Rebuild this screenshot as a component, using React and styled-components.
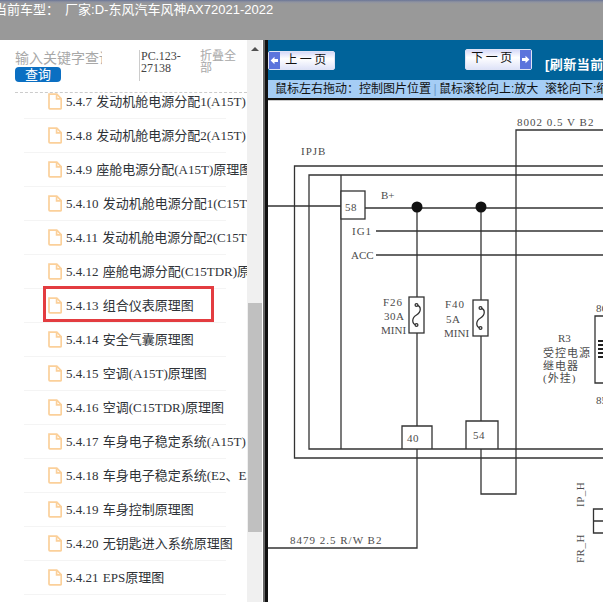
import React from "react";
import styled, { createGlobalStyle } from "styled-components";

const CJK = `"Liberation Sans", "Noto Sans CJK SC", sans-serif`;
const SERIF = `"Liberation Serif", "Noto Sans CJK SC", serif`;

const Global = createGlobalStyle`
  html, body { margin: 0; padding: 0; background: #fff; overflow: hidden; }
  #root { width: 603px; height: 602px; }
  * { box-sizing: border-box; }
`;

const Page = styled.div`
  width: 603px;
  height: 602px;
  display: flex;
  flex-direction: column;
  overflow: hidden;
`;

const Header = styled.header`
  flex: 0 0 40px;
  background: linear-gradient(#6a7596 0, #8f93a0 2px, #999 4px);
  color: #fff;
  font: 13px/17px ${CJK};
  padding-top: 1px;
  white-space: nowrap;
  overflow: hidden;
`;

const HeaderText = styled.div`
  margin-left: -6px;
  word-spacing: 2.5px;
`;

const Body = styled.div`
  flex: 1;
  min-height: 0;
  display: flex;
`;

const Sidebar = styled.aside`
  position: relative;
  flex: 0 0 247px;
  display: flex;
  flex-direction: column;
  background: #fff;
  overflow: hidden;
`;

const SearchBar = styled.div`
  flex: 0 0 53px;
  margin-left: 15px;
  padding-top: 10px;
  display: flex;
  border-bottom: 1px dashed #ccc;
`;

const SearchBox = styled.div`
  width: 124px;
  display: flex;
  flex-direction: column;
  align-items: flex-start;
`;

const SearchInput = styled.input`
  width: 87px;
  height: 17px;
  border: 0;
  padding: 0;
  outline: 0;
  background: transparent;
  font: 14px/17px ${CJK};
  &::placeholder { color: #a8a8a8; opacity: 1; }
`;

const SearchButton = styled.button`
  width: 46px;
  height: 15px;
  border: 0;
  border-radius: 4px;
  padding: 0;
  background: #0b6fc2;
  color: #fff;
  font: 13px/15px ${CJK};
`;

const Code = styled.div`
  width: 61px;
  height: 31px;
  padding-left: 1px;
  border-left: 1px solid #ccc;
  color: #444;
  font: 12px/12px ${SERIF};
`;

const Collapse = styled.div`
  width: 37px;
  color: #a8a8a8;
  font: 12px/12px ${CJK};
`;

const List = styled.ul`
  flex: 1;
  min-height: 0;
  margin: 0;
  padding: 0;
  list-style: none;
  overflow: hidden;
`;

const Row = styled.li`
  width: 202px;
  height: 34px;
  margin-left: 24px;
  padding-left: 24px;
  display: flex;
  align-items: center;
  gap: 4px;
  border-bottom: 1px solid #f4f4f4;
  color: #2f3338;
  font: 13px/16px ${SERIF};
  word-spacing: 1px;
  white-space: nowrap;
  &:first-child { margin-top: -8px; }
`;

const Highlight = styled.div`
  position: absolute;
  left: 43px;
  top: 246px;
  width: 171px;
  height: 36px;
  border: 3px solid #e33c40;
`;

const Scrollbar = styled.div`
  position: relative;
  flex: 0 0 15px;
  background: #f0f0f0;
`;

const ScrollArrow = styled.div`
  position: absolute;
  left: 4px;
  top: 7px;
  border-left: 4px solid transparent;
  border-right: 4px solid transparent;
  border-bottom: 4px solid #505050;
`;

const ScrollThumb = styled.div`
  position: absolute;
  left: 1px;
  top: 263px;
  width: 14px;
  height: 229px;
  background: #c0c0c0;
`;

const Divider = styled.div`
  flex: 0 0 6px;
  background: linear-gradient(90deg, #fff 0 1px, #666 1px 3px, #111 3px 6px);
`;

const Main = styled.main`
  flex: 1;
  min-width: 0;
  display: flex;
  flex-direction: column;
  overflow: hidden;
`;

const Toolbar = styled.div`
  flex: 0 0 40px;
  display: flex;
  background: #00639a;
  white-space: nowrap;
`;

const PageButton = styled.div`
  flex: none;
  width: 67px;
  height: ${p => p.$tall ? 21 : 19}px;
  margin-top: ${p => p.$tall ? 9 : 11}px;
  margin-left: ${p => p.$offset}px;
  display: flex;
  flex-direction: ${p => p.$reverse ? "row-reverse" : "row"};
  border: 1px solid #dfe3f5;
  border-radius: 2px;
  background: linear-gradient(#d6daf8, #fff 40%, #dfe3f8);
  color: #111;
  font: 12px/17px ${CJK};
`;

const ButtonCap = styled.span`
  flex: 0 0 11px;
  display: flex;
  align-items: center;
  justify-content: center;
  background: #5b74dc;
`;

const ButtonLabel = styled.span`
  flex: 1;
  text-align: center;
  letter-spacing: 2.5px;
`;

const Refresh = styled.div`
  flex: none;
  margin: 17px 0 0 13px;
  color: #fff;
  font: bold 13px/16px ${CJK};
  letter-spacing: 0.5px;
`;

const Hint = styled.div`
  flex: 0 0 20px;
  padding-left: 7px;
  background: #a5cdf5;
  border-bottom: 2px solid #111;
  color: #111;
  font: 12px/18px ${CJK};
  white-space: pre;
`;

const HintSep = styled.span`
  display: inline-block;
  width: 8px;
  text-align: center;
  color: #6f9cc8;
`;

const Diagram = styled.svg`
  display: block;
  flex: 1;
  min-height: 0;
  width: 335px;
  border-top: 1px solid #ccc;
  background: #fff;
`;

const Wires = styled.g`
  fill: none;
  stroke: #333;
  stroke-width: 1.3;
`;

const Label = styled.text`
  fill: #4c4c4c;
  font-family: ${SERIF};
  font-size: ${p => p.$size || 11}px;
  letter-spacing: ${p => p.$spacing ?? 1}px;
`;

const items = [
  "5.4.7 发动机舱电源分配1(A15T)",
  "5.4.8 发动机舱电源分配2(A15T)",
  "5.4.9 座舱电源分配(A15T)原理图",
  "5.4.10 发动机舱电源分配1(C15TDR)",
  "5.4.11 发动机舱电源分配2(C15TDR)",
  "5.4.12 座舱电源分配(C15TDR)原理图",
  "5.4.13 组合仪表原理图",
  "5.4.14 安全气囊原理图",
  "5.4.15 空调(A15T)原理图",
  "5.4.16 空调(C15TDR)原理图",
  "5.4.17 车身电子稳定系统(A15T)",
  "5.4.18 车身电子稳定系统(E2、E3)",
  "5.4.19 车身控制原理图",
  "5.4.20 无钥匙进入系统原理图",
  "5.4.21 EPS原理图",
];

const DocIcon = () => (
  <svg width="14" height="17" viewBox="0 0 14 17" fill="none" stroke="#fbd09a" strokeWidth="1.7" style={{ flex: "none" }}>
    <path d="M1 1.2h7.8L13.2 5.6V15a.9.9 0 0 1-.9.9H1.9A.9.9 0 0 1 1 15V1.2Z" />
    <path d="M8.6 1.2V5.8H13.2" />
  </svg>
);

const Arrow = ({ flip }) => (
  <svg width="9" height="9" viewBox="0 0 9 9" style={flip ? { transform: "scaleX(-1)" } : undefined}>
    <path d="M1 3h3.5V.8L8.4 4.5 4.5 8.2V6H1Z" fill="#fff" />
  </svg>
);

const Fuse = ({ x, y }) => (
  <g>
    <rect x={x} y={y} width="15" height="36" fill="#fff" />
    <path d={`M${x + 7.5} ${y + 8}c5 1 5 7 0 10s-5 9 0 10`} />
    <circle cx={x + 7.5} cy={y + 8} r="1.4" fill="#fff" />
    <circle cx={x + 7.5} cy={y + 28} r="1.4" fill="#fff" />
  </g>
);

export default function App() {
  return (
    <Page>
      <Global />
      <Header>
        <HeaderText>当前车型： 厂家:D-东风汽车风神AX72021-2022</HeaderText>
      </Header>
      <Body>
        <Sidebar>
          <SearchBar>
            <SearchBox>
              <SearchInput placeholder="输入关键字查询" readOnly />
              <SearchButton>查询</SearchButton>
            </SearchBox>
            <Code>PC.123-27138</Code>
            <Collapse>折叠全部</Collapse>
          </SearchBar>
          <List>
            {items.map(t => (
              <Row key={t}>
                <DocIcon />
                <span>{t}</span>
              </Row>
            ))}
          </List>
          <Highlight />
        </Sidebar>
        <Scrollbar>
          <ScrollArrow />
          <ScrollThumb />
        </Scrollbar>
        <Divider />
        <Main>
          <Toolbar>
            <PageButton $offset={0}>
              <ButtonCap><Arrow flip /></ButtonCap>
              <ButtonLabel>上一页</ButtonLabel>
            </PageButton>
            <PageButton $offset={130} $reverse $tall>
              <ButtonCap><Arrow /></ButtonCap>
              <ButtonLabel>下一页</ButtonLabel>
            </PageButton>
            <Refresh>[刷新当前页面]</Refresh>
          </Toolbar>
          <Hint>鼠标左右拖动：控制图片位置<HintSep>|</HintSep>{"鼠标滚轮向上:放大  滚轮向下:缩小"}</Hint>
          <Diagram viewBox="268 101 335 501" preserveAspectRatio="xMinYMin slice">
            <Wires>
              <path d="M603 130H516V494H481V449" />
              <path d="M603 166H294.5V458H603" />
              <path d="M603 175H309V449H603" />
              <path d="M341 175V449" />
              <path d="M268 206H341" />
              <path d="M365 208H603" />
              <path d="M376 231H603" />
              <path d="M376 255H603" />
              <path d="M417 207V297M417 333V426M417 449V548H268" />
              <path d="M481 207V300M481 336V421" />
              <rect x="341" y="191" width="24" height="28" fill="#fff" />
              <path d="M402 449V426H432V449" />
              <path d="M466 449V421H498V449" />
              <Fuse x={409} y={297} />
              <Fuse x={473} y={300} />
              <path d="M603 316H595V383H603" />
              <path d="M603 509H593.500V533H603M593.500 521H603" />
            </Wires>
            <circle cx="417" cy="207" r="5.5" fill="#111" />
            <circle cx="481" cy="207" r="5.5" fill="#111" />
            <path d="M598 341h5M598 345h5M598 349h5M598 353h5M598 357h5" stroke="#222" strokeWidth="2" />
            <Label x="517" y="126">8002 0.5 V B2</Label>
            <Label x="301" y="155">IPJB</Label>
            <Label x="345" y="211" $spacing={0.5}>58</Label>
            <Label x="381" y="199" $spacing={0}>B+</Label>
            <Label x="352" y="235">IG1</Label>
            <Label x="351" y="259" $spacing={0}>ACC</Label>
            <Label x="383" y="306">F26</Label>
            <Label x="384" y="320" $spacing={0.5}>30A</Label>
            <Label x="381" y="334" $spacing={0}>MINI</Label>
            <Label x="445" y="308">F40</Label>
            <Label x="446" y="323" $spacing={0.5}>5A</Label>
            <Label x="444" y="337" $spacing={0}>MINI</Label>
            <Label x="558" y="342" $spacing={0}>R3</Label>
            <Label x="596" y="312" $spacing={0}>86</Label>
            <Label x="596" y="404" $spacing={0}>85</Label>
            <Label x="543" y="357">受控电源</Label>
            <Label x="543" y="370">继电器</Label>
            <Label x="543" y="382">(外挂)</Label>
            <Label x="407" y="442" $spacing={0.5}>40</Label>
            <Label x="473" y="439" $spacing={0.5}>54</Label>
            <Label x="290" y="544">8479 2.5 R/W B2</Label>
            <Label transform="translate(584 507) rotate(-90)" $spacing={0.5}>IP_H</Label>
            <Label transform="translate(584 563) rotate(-90)" $spacing={0.5}>FR_H</Label>
          </Diagram>
        </Main>
      </Body>
    </Page>
  );
}
